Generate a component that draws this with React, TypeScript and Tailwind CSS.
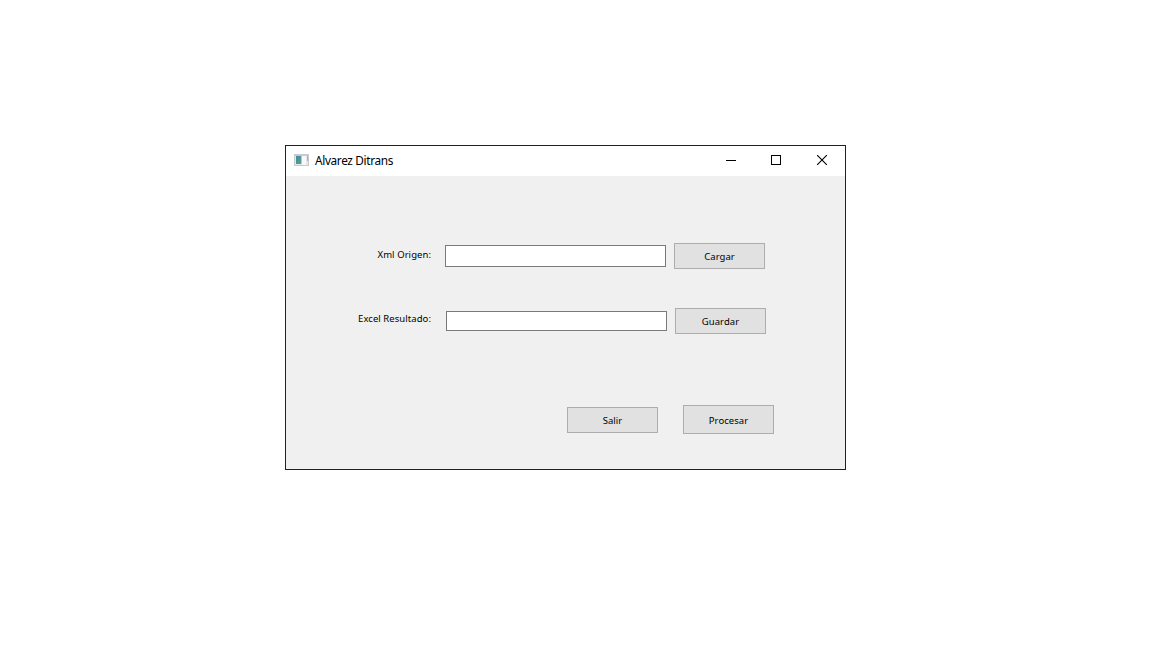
import type { ReactNode } from "react";

function PushButton({ children, className }: { children: ReactNode; className: string }) {
  return (
    <button
      type="button"
      className={`flex w-[91px] shrink-0 items-center justify-center border border-[#adadad] bg-[#e1e1e1] leading-none ${className}`}
    >
      {children}
    </button>
  );
}

function AppIcon() {
  return (
    <svg width="16" height="14" viewBox="0 0 16 14" shapeRendering="crispEdges">
      <defs>
        <linearGradient id="pane" x1="0" y1="0" x2="1" y2="1">
          <stop offset="0" stopColor="#4a82ad" />
          <stop offset="1" stopColor="#58a87c" />
        </linearGradient>
      </defs>
      <rect x="0" y="0" width="15" height="12" fill="#c6c9cd" />
      <rect x="1" y="2" width="13" height="9" fill="#e6e9eb" />
      <rect x="2" y="2" width="5" height="8" fill="url(#pane)" />
      <rect x="7" y="2" width="1" height="8" fill="#b4ccd0" />
      <rect x="8" y="2" width="4" height="9" fill="#f7f8f9" />
      <rect x="13" y="2" width="1" height="5" fill="#8fc4a8" />
    </svg>
  );
}

function TitleBar() {
  return (
    <header className="flex h-[30px] items-center bg-white pl-2">
      <AppIcon />
      <h1 className="ml-[5px] whitespace-nowrap text-[11.8px] leading-none tracking-[-0.34px]">Alvarez Ditrans</h1>
      <div className="ml-auto flex h-full">
        <button type="button" aria-label="Minimizar" className="flex h-[28px] w-[46px] items-center justify-center">
          <svg width="10" height="10" shapeRendering="crispEdges">
            <rect x="0" y="5" width="10" height="1" />
          </svg>
        </button>
        <button type="button" aria-label="Maximizar" className="flex h-[28px] w-[45px] items-center justify-center pr-px">
          <svg width="10" height="10" shapeRendering="crispEdges">
            <rect x="0.5" y="0.5" width="9" height="9" fill="none" stroke="#000" />
          </svg>
        </button>
        <button type="button" aria-label="Cerrar" className="flex h-[28px] w-[46px] items-center justify-center">
          <svg width="10" height="10">
            <path d="M0 0l10 10M10 0L0 10" stroke="#000" strokeWidth="1.1" />
          </svg>
        </button>
      </div>
    </header>
  );
}

export default function App() {
  return (
    <div className="flex h-[648px] w-[1152px] items-start bg-white pl-[285px] pt-[145px] font-['Noto_Sans',sans-serif] text-black">
      <main className="flex h-[325px] w-[561px] flex-col border border-[#1b2030] bg-white">
        <TitleBar />
        <form className="flex flex-1 flex-col bg-[#f0f0f0] pt-[67px] text-[9.5px] tracking-[0.06px]">
          <div className="flex h-[26px] items-center">
            <label htmlFor="origen" className="w-[145px] pb-[3px] text-right leading-none">Xml Origen:</label>
            <input id="origen" className="ml-[14px] h-[22px] w-[221px] border border-[#7a7a7a] bg-white px-1 outline-none" />
            <PushButton className="ml-2 h-[26px] pt-px">Cargar</PushButton>
          </div>
          <div className="mt-[39px] flex h-[26px] items-center">
            <label htmlFor="resultado" className="w-[145px] pb-[5px] text-right leading-none">Excel Resultado:</label>
            <input id="resultado" className="ml-[15px] h-[20px] w-[221px] border border-[#7a7a7a] bg-white px-1 outline-none" />
            <PushButton className="ml-2 h-[26px] pt-px">Guardar</PushButton>
          </div>
          <div className="mt-[71px] flex items-start pl-[281px]">
            <PushButton className="mt-[2px] h-[26px] pt-px">Salir</PushButton>
            <PushButton className="ml-[25px] h-[29px] pt-[2px]">Procesar</PushButton>
          </div>
        </form>
      </main>
    </div>
  );
}
